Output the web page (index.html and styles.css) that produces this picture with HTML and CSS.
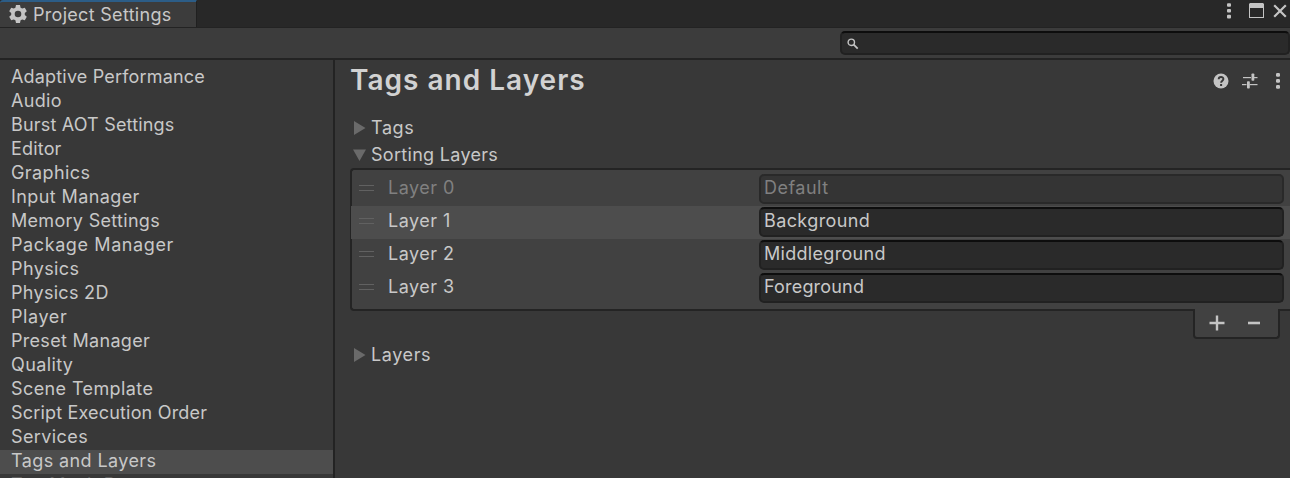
FILE: index.html
```html
<!DOCTYPE html>
<html lang="en">
<head>
<meta charset="utf-8">
<title>Project Settings</title>
<link rel="stylesheet" href="styles.css">
</head>
<body>
<div class="window">
  <header class="tabbar">
    <div class="tab">
      <svg class="gear" width="18" height="18" viewBox="0 0 18 18"><path fill="#c4c4c4" fill-rule="evenodd" d="M7 0h4l.6 2.700 1.600.9L15.800 2.800l2 3.500-2 1.800v1.800l2 1.800-2 3.500-2.600-.8-1.600.9L11 18H7l-.6-2.700-1.600-.9-2.600.8-2-3.500 2-1.800V8.100l-2-1.800 2-3.500 2.600.8 1.600-.9zM9 5.700a3.300 3.300 0 1 0 0 6.600 3.300 3.300 0 0 0 0-6.600z"/></svg>
      <span class="t-tab snug">Project Settings</span>
    </div>
    <div class="winbtns">
      <svg width="4" height="16" viewBox="0 0 4 16" fill="#c4c4c4"><rect y="0.200" width="4" height="3.600" rx="1"/><rect y="6" width="4" height="3.600" rx="1"/><rect y="11.800" width="4" height="3.600" rx="1"/></svg>
      <svg class="max" width="15" height="15" viewBox="0 0 15 15"><path fill="#c4c4c4" fill-rule="evenodd" d="M1 0h13l1 1v14H0V1zM1 5v9h13V5z"/></svg>
      <svg class="close" width="14" height="14" viewBox="0 0 14 14"><path d="M1.200 1.200l11.600 11.600M12.800 1.200L1.200 12.800" stroke="#c4c4c4" stroke-width="2.200"/></svg>
    </div>
  </header>
  <div class="toolbar">
    <div class="search">
      <svg width="12" height="12" viewBox="0 0 12 12" fill="none" stroke="#c4c4c4"><circle cx="4.300" cy="4.300" r="3.200" stroke-width="1.400"/><path d="M6.700 6.700L10.700 10.700" stroke-width="1.800"/></svg>
    </div>
  </div>
  <div class="body">
    <nav class="side">
      <div class="item tight">Adaptive Performance</div>
      <div class="item snug">Audio</div>
      <div class="item tight">Burst AOT Settings</div>
      <div class="item tight">Editor</div>
      <div class="item close-set">Graphics</div>
      <div class="item close-set">Input Manager</div>
      <div class="item snug">Memory Settings</div>
      <div class="item wide">Package Manager</div>
      <div class="item close-set">Physics</div>
      <div class="item snug">Physics 2D</div>
      <div class="item wide">Player</div>
      <div class="item snug">Preset Manager</div>
      <div class="item close-set">Quality</div>
      <div class="item close-set">Scene Template</div>
      <div class="item tight">Script Execution Order</div>
      <div class="item close-set">Services</div>
      <div class="item close-set selected">Tags and Layers</div>
      <div class="item next">TextMesh Pro</div>
    </nav>
    <main class="main">
      <div class="titlebar">
        <h1>Tags and Layers</h1>
        <div class="tools">
          <svg width="16" height="16" viewBox="0 0 16 16"><circle cx="8" cy="8" r="7.500" fill="#c4c4c4"/><path d="M5.700 6.200C5.700 3.300 10.400 3.300 10.400 6.100C10.400 7.700 8.100 7.700 8.100 9.800" fill="none" stroke="#383838" stroke-width="1.900"/><rect x="7.100" y="11" width="2" height="2" fill="#383838"/></svg>
          <svg class="sliders" width="16" height="16" viewBox="0 0 16 16" fill="#c4c4c4"><rect x="1" y="4" width="8" height="1.200"/><rect x="9.500" y="0.500" width="2.800" height="7.300" rx=".8"/><rect x="12" y="4" width="3.500" height="1.200"/><rect x="0" y="11" width="4.500" height="1.200"/><rect x="5" y="8.300" width="2.800" height="7.300" rx=".8"/><rect x="7.500" y="11" width="8" height="1.200"/></svg>
          <svg width="4" height="16" viewBox="0 0 4 16" fill="#c4c4c4"><rect y="0" width="4" height="3.800" rx="1.200"/><rect y="6" width="4" height="3.800" rx="1.200"/><rect y="12" width="4" height="3.800" rx="1.200"/></svg>
        </div>
      </div>
      <div class="fold">
        <svg width="13" height="14" viewBox="0 0 13 14"><path d="M1 0L12.500 7L1 14z" fill="#6a6a6a"/></svg><span class="wide">Tags</span>
      </div>
      <div class="fold">
        <svg width="13" height="14" viewBox="0 0 13 14"><path d="M0 1.500H13L6.500 13z" fill="#6a6a6a"/></svg><span class="snug">Sorting Layers</span>
      </div>
      <div class="list">
        <div class="row disabled"><i class="grip"></i><span class="label">Layer 0</span><div class="field">Default</div></div>
        <div class="row active"><i class="grip"></i><span class="label">Layer 1</span><div class="field close-set">Background</div></div>
        <div class="row"><i class="grip"></i><span class="label">Layer 2</span><div class="field snug">Middleground</div></div>
        <div class="row"><i class="grip"></i><span class="label">Layer 3</span><div class="field tight">Foreground</div></div>
      </div>
      <div class="footer">
        <svg width="16" height="16" viewBox="0 0 16 16"><path d="M8 .5V15.500M.5 8H15.500" stroke="#c4c4c4" stroke-width="2.400"/></svg>
        <svg width="12" height="16" viewBox="0 0 12 16"><path d="M0 8H12" stroke="#c4c4c4" stroke-width="2.600"/></svg>
      </div>
      <div class="fold last">
        <svg width="13" height="14" viewBox="0 0 13 14"><path d="M1 0L12.500 7L1 14z" fill="#6a6a6a"/></svg><span class="wide">Layers</span>
      </div>
    </main>
  </div>
</div>
</body>
</html>
```
FILE: styles.css
```css
* { box-sizing: border-box; }
body {
  margin: 0;
  background: #383838;
  color: #c8c8c8;
  font: 18px/24px Inter, "Liberation Sans", sans-serif;
  letter-spacing: 0.5px;
}
svg { display: block; flex: none; }
.wide { letter-spacing: 0.6px; }
.close-set { letter-spacing: 0.4px; }
.snug { letter-spacing: 0.3px; }
.tight { letter-spacing: 0.18px; }
.window { width: 1290px; height: 478px; overflow: hidden; display: flex; flex-direction: column; }
.tabbar {
  height: 28px;
  flex: none;
  display: flex;
  justify-content: space-between;
  background: #282828;
  border-bottom: 1px solid #232323;
}
.tab {
  width: 197px;
  display: flex;
  align-items: center;
  padding: 0 0 0 9px;
  gap: 6px;
  background: #3c3c3c;
  border-top: 2px solid #2c5d87;
  border-right: 1px solid #202020;
  border-top-left-radius: 3px;
}
.gear { margin-top: -1px; }
.t-tab { padding-top: 1px; }
.winbtns { display: flex; padding: 3px 3px 0 0; }
.max { margin-left: 18px; }
.close { margin: 1px 0 0 9px; }
.toolbar {
  height: 32px;
  flex: none;
  display: flex;
  justify-content: flex-end;
  padding-top: 3px;
  background: #3c3c3c;
  border-bottom: 2px solid #232323;
}
.search {
  width: 450px;
  height: 24px;
  padding: 5px 0 0 5px;
  background: #2a2a2a;
  border: 2px solid #212121;
  border-top-color: #0d0d0d;
  border-radius: 5px;
}
.body { flex: 1; display: flex; min-height: 0; }
.side { width: 335px; padding-top: 6px; border-right: 2px solid #232323; overflow: hidden; }
.item { height: 24px; padding-left: 11px; line-height: 22px; white-space: nowrap; }
.selected { background: #4d4d4d; }
.next { line-height: 21px; color: #606060; }
.main { flex: 1; display: flex; flex-direction: column; padding-left: 15px; min-width: 0; }
.titlebar { height: 54px; display: flex; justify-content: space-between; padding: 0 10px 0 0; }
h1 { margin: 0; font-size: 28px; line-height: 40px; font-weight: 600; letter-spacing: 1px; color: #d2d2d2; }
.tools { display: flex; gap: 13px; padding-top: 13px; }
.tools svg:last-child { margin-left: 5px; }
.fold { height: 27px; display: flex; align-items: center; gap: 5px; padding-left: 3px; }
.list {
  height: 143px;
  padding: 3px 0;
  background: #414141;
  border: 2px solid #242424;
  border-right: 0;
  border-radius: 4px 0 0 4px;
}
.row { height: 33px; display: flex; align-items: center; padding: 0 0 2px 7px; }
.active { background: #4d4d4d; margin-left: -1px; padding-left: 8px; }
.grip { width: 15px; height: 6px; border: solid #616161; border-width: 1px 0; margin-top: -1px; }
.label { width: 371px; margin-left: 14px; padding-bottom: 2px; }
.field {
  width: 525px;
  height: 30px;
  padding-left: 3px;
  line-height: 24px;
  background: #2a2a2a;
  border: 2px solid #212121;
  border-top-color: #0d0d0d;
  border-radius: 5px;
}
.disabled { color: #808080; }
.disabled .field { background: #343434; border-color: #292929; }
.footer {
  align-self: flex-end;
  width: 87px;
  height: 30px;
  margin: -2px 10px 0 0;
  display: flex;
  align-items: center;
  gap: 23px;
  padding-left: 14px;
  background: #414141;
  border: 2px solid #242424;
  border-top: 0;
  border-radius: 0 0 4px 4px;
}
.last { margin-top: 2px; }
```
